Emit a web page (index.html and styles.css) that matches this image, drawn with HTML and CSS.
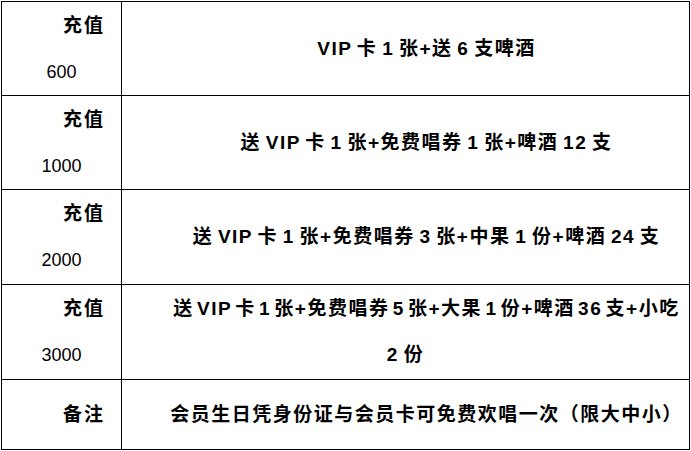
FILE: index.html
```html
<!DOCTYPE html>
<html lang="zh-CN">
<head>
<meta charset="utf-8">
<title>充值优惠</title>
<link rel="stylesheet" href="styles.css">
</head>
<body>
<div class="table">
  <div class="cell label"><div class="l1">充值</div><div class="l2">600</div></div>
  <div class="cell offer"><div class="o1">VIP 卡 1 张+送 6 支啤酒</div></div>

  <div class="cell label"><div class="l1">充值</div><div class="l2">1000</div></div>
  <div class="cell offer"><div class="o1">送 VIP 卡 1 张+免费唱券 1 张+啤酒 12 支</div></div>

  <div class="cell label"><div class="l1">充值</div><div class="l2">2000</div></div>
  <div class="cell offer"><div class="o1">送 VIP 卡 1 张+免费唱券 3 张+中果 1 份+啤酒 24 支</div></div>

  <div class="cell label"><div class="l1">充值</div><div class="l2">3000</div></div>
  <div class="cell offer"><div class="o1 tight">送 VIP 卡 1 张+免费唱券 5 张+大果 1 份+啤酒 36 支+小吃</div><div class="o2">2 份</div></div>

  <div class="cell label"><div class="l1">备注</div></div>
  <div class="cell offer"><div class="o1">会员生日凭身份证与会员卡可免费欢唱一次（限大中小）</div></div>
</div>
</body>
</html>
```
FILE: styles.css
```css
html, body {
  margin: 0;
  padding: 0;
  background: #fff;
}
body {
  padding: 1px 0 0 1px;
  font-family: "Liberation Sans", "Noto Sans CJK SC", sans-serif;
  color: #000;
}
.table {
  display: grid;
  grid-template-columns: 119px 567px;
  grid-template-rows: 93px 93px 94px 94px 69px;
  gap: 1px;
  padding: 1px;
  background: #000;
  width: max-content;
}
.cell {
  background: #fff;
  display: flex;
  flex-direction: column;
  justify-content: center;
  line-height: 46px;
  white-space: nowrap;
}
.label .l1 {
  font-size: 19px;
  font-weight: 700;
  letter-spacing: 2px;
  text-align: right;
  padding-right: 16px;
}
.label .l2 {
  font-size: 18px;
  font-weight: 400;
  text-align: center;
}
.offer {
  font-size: 19px;
  font-weight: 700;
  letter-spacing: 1.5px;
  word-spacing: -2px;
  text-align: center;
}
.offer .o1 {
  text-indent: 42px;
}
.offer .o1.tight {
  word-spacing: -3.5px;
}
.offer .o2 {
  text-indent: 0;
}
```
